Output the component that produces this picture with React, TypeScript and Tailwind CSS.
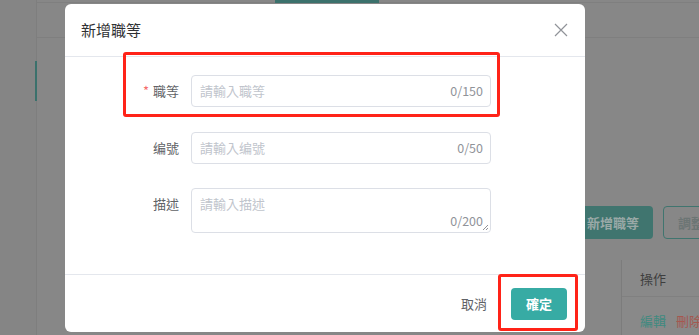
import React from "react";

const font = { fontFamily: '"Noto Sans CJK TC", "Noto Sans", sans-serif' };

function Field({
  label,
  required,
  placeholder,
  max,
  area,
}: {
  label: string;
  required?: boolean;
  placeholder: string;
  max: number;
  area?: boolean;
}) {
  return (
    <div className="flex items-start">
      <label className="w-[126px] shrink-0 pr-3 text-right text-[13px] leading-[32px] text-[#606266]">
        {required && <span className="mr-1 text-[#f56c6c]">*</span>}
        {label}
      </label>
      {area ? (
        <div className="relative h-[45px] w-[300px] rounded-[4px] border border-[#dcdfe6] bg-white">
          <span className="absolute left-[8px] top-[5px] text-[13px] leading-[20px] text-[#c0c4cc]">{placeholder}</span>
          <span className="absolute bottom-[2px] right-[7px] text-[12.5px] leading-[18px] text-[#909399]">0/{max}</span>
          <svg className="absolute bottom-[1px] right-[1px]" width="7" height="7" viewBox="0 0 7 7">
            <path d="M1 6 L6 1 M4 6 L6 4" stroke="#909399" strokeWidth="1" fill="none" />
          </svg>
        </div>
      ) : (
        <div className="flex h-[32px] w-[300px] items-center justify-between rounded-[4px] border border-[#dcdfe6] bg-white pl-[8px] pr-[7px]">
          <span className="text-[13px] text-[#c0c4cc]">{placeholder}</span>
          <span className="text-[12.5px] text-[#909399]">0/{max}</span>
        </div>
      )}
    </div>
  );
}

export default function App() {
  return (
    <div className="relative h-[335px] w-[699px] overflow-hidden bg-[#878787]" style={font}>
      {/* dimmed page behind the dialog */}
      <div className="flex h-full">
        <aside className="w-[37px] shrink-0 border-r border-[#7e7e7e] bg-[#858585] pt-[61px]">
          <div className="ml-[35px] h-[40px] w-[2px] bg-[#3b716c]" />
        </aside>
        <main className="flex-1">
          <div className="h-[3px] border-b border-[#7f7f7f]">
            <div className="ml-[238px] h-[3px] w-[104px] bg-[#3b716c]" />
          </div>
          <div className="h-[35px] border-b border-[#7f7f7f]" />
          <div className="flex h-[201px] items-end gap-[10px] pl-[536px]">
            <div className="flex h-[33px] w-[80px] shrink-0 items-center justify-center rounded-[4px] bg-[#40756f] text-[13px] font-bold text-[#9aa9a7]">
              新增職等
            </div>
            <div className="flex h-[33px] w-[100px] shrink-0 items-center rounded-[4px] border border-[#40756f] pl-[14px] text-[13px] font-bold text-[#6c7574]">
              調整職等順序
            </div>
          </div>
          <div className="mt-[21px] flex h-[75px]">
            <div className="w-[585px] shrink-0 border-r border-[#7c7c7c]" />
            <div className="flex-1 bg-[#898989]">
              <div className="flex h-[37px] items-center border-b border-[#808080] pl-[18px] pt-[1px] text-[13px] text-[#3e3e3e]">
                操作
              </div>
              <div className="flex h-[38px] items-center gap-[10px] pl-[18px] pt-[9px] text-[13px]">
                <span className="text-[#3f8a80]">編輯</span>
                <span className="text-[#a5574f]">刪除</span>
              </div>
            </div>
          </div>
        </main>
      </div>

      {/* dialog */}
      <div className="absolute left-[65px] top-[4px] flex h-[328px] w-[520px] flex-col rounded-[6px] bg-white">
        <div className="flex h-[53px] items-center justify-between border-b border-[#e4e7ed] pl-[16px] pr-[17px]">
          <span className="text-[15px] text-[#303133]">新增職等</span>
          <svg width="14" height="14" viewBox="0 0 14 14">
            <path d="M1 1 L13 13 M13 1 L1 13" stroke="#909399" strokeWidth="1.2" fill="none" />
          </svg>
        </div>
        <div className="flex flex-1 flex-col pt-[18px]">
          <Field label="職等" required placeholder="請輸入職等" max={150} />
          <div className="h-[25px]" />
          <Field label="编號" placeholder="請輸入编號" max={50} />
          <div className="h-[24px]" />
          <Field label="描述" placeholder="請輸入描述" max={200} area />
        </div>
        <div className="flex h-[58px] items-center justify-end gap-[24px] border-t border-[#e4e7ed] pr-[18px]">
          <span className="text-[13px] text-[#606266]">取消</span>
          <button className="flex h-[32px] w-[56px] items-center justify-center rounded-[4px] bg-[#37aba4] text-[13px] font-bold text-white">
            確定
          </button>
        </div>
      </div>

      {/* red annotation boxes */}
      <div className="absolute left-[123px] top-[52px] h-[65px] w-[377px] rounded-[3px] border-[3px] border-[#ff2318]" />
      <div className="absolute left-[498px] top-[274px] h-[57px] w-[80px] rounded-[3px] border-[3px] border-[#ff2318]" />
    </div>
  );
}
